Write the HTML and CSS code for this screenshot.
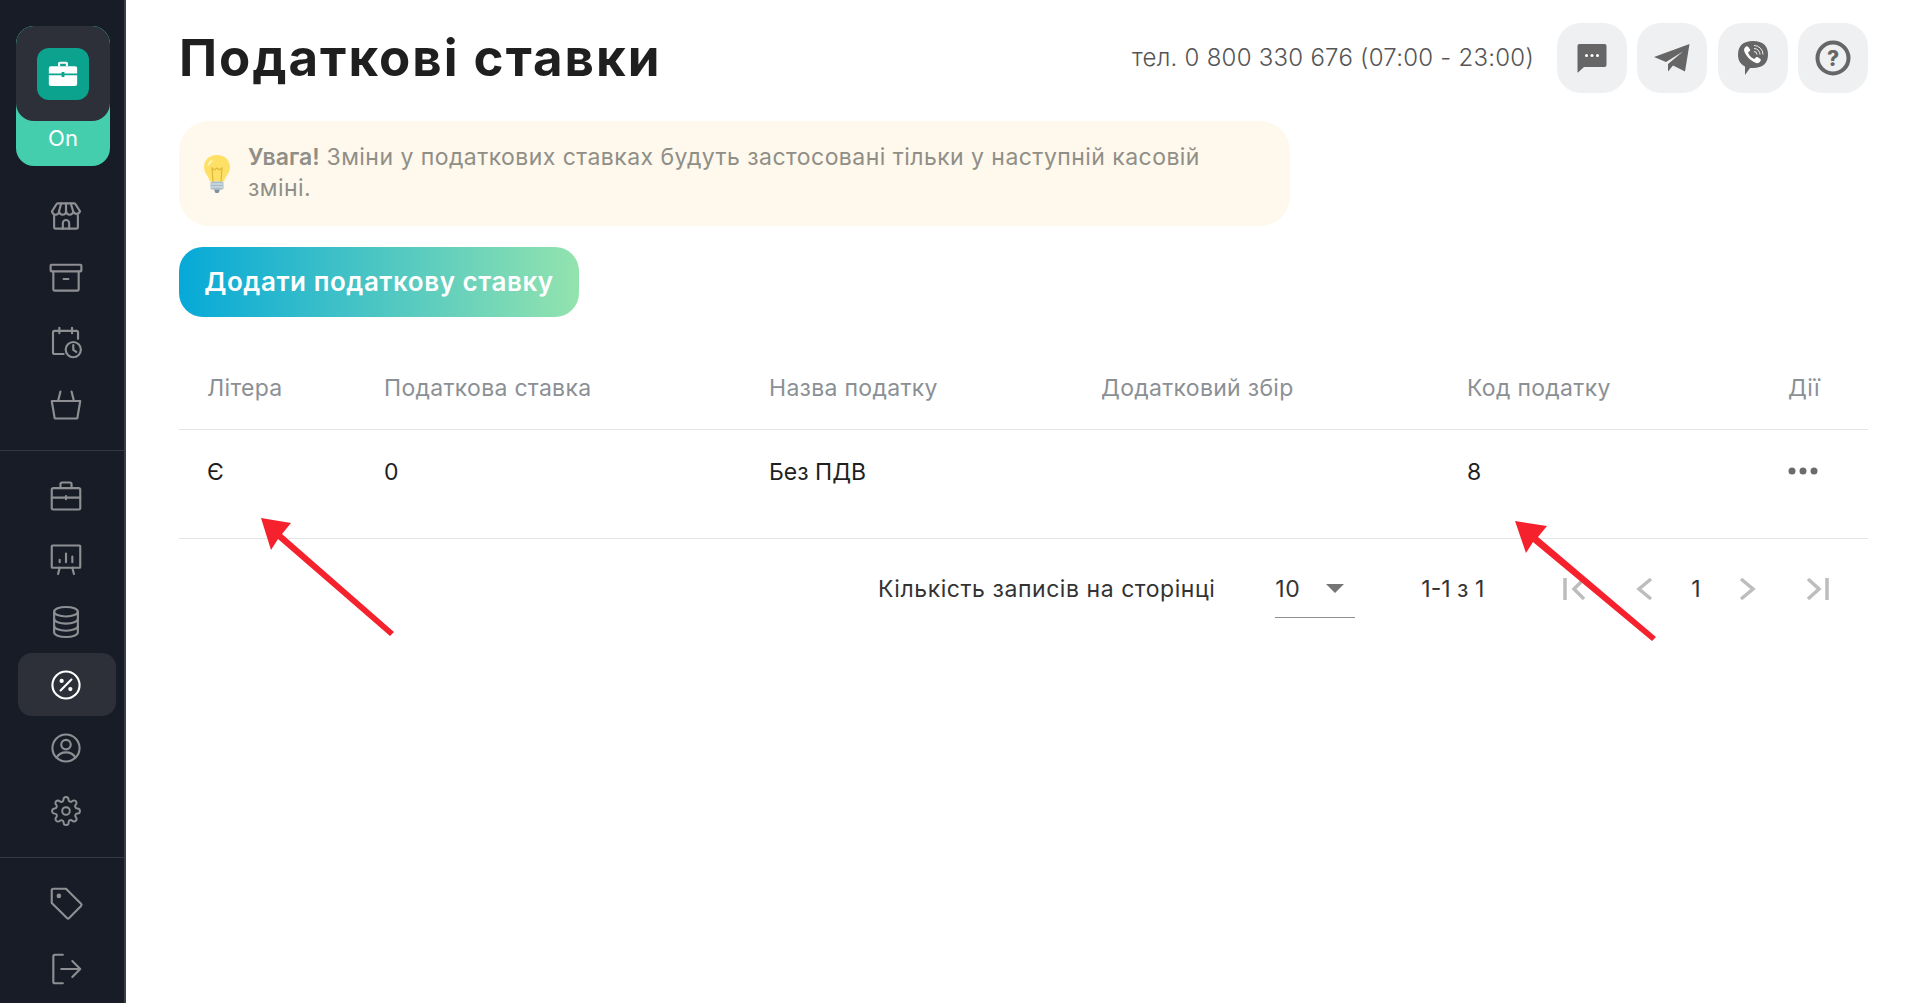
FILE: index.html
```html
<!DOCTYPE html>
<html lang="uk">
<head>
  <meta charset="UTF-8">
  <title>Податкові ставки</title>
  <link rel="stylesheet" href="styles.css">
</head>
<body>
  <aside class="sidebar">
    <div class="shift-widget">
      <div class="shift-top">
        <div class="shift-logo">
          <svg width="34" height="34" viewBox="0 0 24 24" fill="#fff"><path d="M8.500 6.500V4.600a1.300 1.300 0 0 1 1.300-1.300h4.400a1.300 1.300 0 0 1 1.300 1.300v1.900H14V4.800h-4v1.700z"/><path d="M2 8a1.500 1.500 0 0 1 1.500-1.500h17A1.500 1.500 0 0 1 22 8v3.600H13v-1h-2v1H2z"/><path d="M2 12.800h9v1.400h2v-1.400h9V19a1.500 1.500 0 0 1-1.500 1.500h-17A1.500 1.500 0 0 1 2 19z"/></svg>
        </div>
      </div>
      <div class="shift-status">On</div>
    </div>

    <nav class="nav-group nav-first">
      <a class="nav-item"><svg class="nav-icon" viewBox="0 0 24 24"><path d="M3.200 9L6 4.500a1 1 0 0 1 .8-.5H17.200a1 1 0 0 1 .8.5L20.800 9"/><path d="M3.200 9a2.200 2.200 0 0 0 4.450 0a2.200 2.200 0 0 0 4.450 0a2.200 2.200 0 0 0 4.450 0a2.200 2.200 0 0 0 4.250 0"/><path d="M7.600 9L9 4M12 9V4M16.500 9L15 4"/><path d="M4.500 11.500V19a1 1 0 0 0 1 1H18.500a1 1 0 0 0 1-1V11.500"/><path d="M10 20V16.500a2 2 0 0 1 4 0V20"/></svg></a>
      <a class="nav-item"><svg class="nav-icon" viewBox="0 1 24 24"><rect x="2.300" y="4" width="19.400" height="4.200" rx=".5"/><path d="M4 8.200V19.500a.8.8 0 0 0 .8.8H19.200a.8.8 0 0 0 .8-.8V8.200"/><path d="M10.500 13H13.500"/></svg></a>
      <a class="nav-item"><svg class="nav-icon" viewBox="0 0 24 24"><path d="M19.600 10V6a1 1 0 0 0-1-1H4.800a1 1 0 0 0-1 1V18.600a1 1 0 0 0 1 1H10.500"/><path d="M7.800 3V6.500M15.800 3V6.500"/><circle cx="16.600" cy="16.800" r="4.800"/><path d="M16.600 14V17L18.500 18.300"/></svg></a>
      <a class="nav-item"><svg class="nav-icon" viewBox="0 0 24 24"><path d="M3 9.500H21L19.300 19.500a1 1 0 0 1-1 1H5.700a1 1 0 0 1-1-1Z"/><path d="M8.500 3.500L7 9.500M15.500 3.500L17 9.500"/></svg></a>
    </nav>

    <nav class="nav-group nav-second">
      <a class="nav-item"><svg class="nav-icon" viewBox="0 0 24 24"><rect x="3" y="7" width="18" height="13.500" rx="1"/><path d="M8.500 7V4.500a1 1 0 0 1 1-1h5a1 1 0 0 1 1 1V7"/><path d="M3 13H21M12 12V14"/></svg></a>
      <a class="nav-item"><svg class="nav-icon" viewBox="0 0 24 24"><rect x="3" y="3.500" width="18" height="14" rx=".5"/><path d="M8 12.500V14M12 8.500V14M16 10.500V14"/><path d="M8 17.500L7 21.500M16 17.500L17 21.500"/></svg></a>
      <a class="nav-item"><svg class="nav-icon" viewBox="0 0 24 24"><ellipse cx="12" cy="5.500" rx="7.500" ry="3"/><path d="M4.500 5.500V18.500c0 1.700 3.400 3 7.500 3s7.500-1.300 7.500-3V5.500"/><path d="M4.500 10c0 1.700 3.400 3 7.500 3s7.500-1.300 7.500-3"/><path d="M4.500 14.500c0 1.700 3.400 3 7.500 3s7.500-1.300 7.500-3"/></svg></a>
      <a class="nav-item active"><svg class="nav-icon nav-round" viewBox="-2 -2 28 28"><circle cx="12" cy="12" r="10"/><path d="M8 16L16 8"/><circle class="dot" cx="8.800" cy="9" r=".8"/><circle class="dot" cx="15.200" cy="15" r=".8"/></svg></a>
      <a class="nav-item"><svg class="nav-icon nav-round" viewBox="-2 -2 28 28"><circle cx="12" cy="12" r="10"/><circle cx="12" cy="9.500" r="3.500"/><path d="M5 19.200c1.500-2.800 4-4 7-4s5.500 1.200 7 4"/></svg></a>
      <a class="nav-item"><svg class="nav-icon nav-round" viewBox="-3 -3 30 30"><circle cx="12" cy="12" r="3"/><path d="M19.400 15a1.650 1.650 0 0 0 .33 1.820l.06.06a2 2 0 0 1 0 2.830 2 2 0 0 1-2.830 0l-.06-.06a1.650 1.650 0 0 0-1.820-.33 1.650 1.650 0 0 0-1 1.510V21a2 2 0 0 1-2 2 2 2 0 0 1-2-2v-.09A1.650 1.650 0 0 0 9 19.400a1.650 1.650 0 0 0-1.820.33l-.06.06a2 2 0 0 1-2.830 0 2 2 0 0 1 0-2.830l.06-.06a1.650 1.650 0 0 0 .33-1.820 1.650 1.650 0 0 0-1.510-1H3a2 2 0 0 1-2-2 2 2 0 0 1 2-2h.09A1.650 1.650 0 0 0 4.600 9a1.650 1.650 0 0 0-.33-1.820l-.06-.06a2 2 0 0 1 0-2.830 2 2 0 0 1 2.830 0l.06.06a1.650 1.650 0 0 0 1.820.33H9a1.650 1.650 0 0 0 1-1.510V3a2 2 0 0 1 2-2 2 2 0 0 1 2 2v.09a1.650 1.650 0 0 0 1 1.510 1.650 1.650 0 0 0 1.820-.33l.06-.06a2 2 0 0 1 2.830 0 2 2 0 0 1 0 2.830l-.06.06a1.650 1.650 0 0 0-.33 1.820V9a1.650 1.650 0 0 0 1.510 1H21a2 2 0 0 1 2 2 2 2 0 0 1-2 2h-.09a1.650 1.650 0 0 0-1.510 1z"/></svg></a>
    </nav>

    <nav class="nav-group nav-last">
      <a class="nav-item"><svg class="nav-icon" viewBox="0 0 24 24"><path d="M3 4a1 1 0 0 1 1-1H12L21.500 12.500a1 1 0 0 1 0 1.400L14 21.500a1 1 0 0 1-1.400 0L3 12Z"/><circle class="dot" cx="7.500" cy="7.500" r=".8"/></svg></a>
      <a class="nav-item nav-exit"><svg class="nav-icon" viewBox="0 0 24 24"><path d="M10 3H5a1 1 0 0 0-1 1V20a1 1 0 0 0 1 1H10"/><path d="M9 12H21M16 7L21 12L16 17"/></svg></a>
    </nav>
  </aside>

  <main class="content">
    <header class="page-header">
      <h1 class="page-title">Податкові ставки</h1>
      <div class="header-right">
        <span class="phone">тел. 0 800 330 676 (07:00 - 23:00)</span>
        <button class="round-btn"><svg width="30" height="29" viewBox="0 0 30 29"><path fill="#666" d="M2.500 0H27.500a2 2 0 0 1 2 2V21a2 2 0 0 1-2 2H7L1 28.500a.3.3 0 0 1-.5-.2V2a2 2 0 0 1 2-2Z"/><circle fill="#fff" cx="9.500" cy="11.500" r="1.500"/><circle fill="#fff" cx="15" cy="11.500" r="1.500"/><circle fill="#fff" cx="20.500" cy="11.500" r="1.500"/></svg></button>
        <button class="round-btn"><svg width="36" height="28" viewBox="0 0 36 28"><path fill="#666" d="M35.500 0L0 13L12 18L29 7.500L14 20V27.500L19 21.500L31 27.500Z"/></svg></button>
        <button class="round-btn"><svg width="30" height="34" viewBox="0 0 30 34"><path fill="#666" d="M15 0C25 0 30 5 30 13.500C30 22 25 27 15 27H12L7 34V25.500C2 23 0 19 0 13.500C0 5 5 0 15 0Z"/><path fill="#fff" d="M8 5.500c1-.6 1.700-.3 2.300.5l1.600 2.300c.5.800.3 1.400-.4 2l-1 .8c-.4.4-.4.800-.2 1.200 1 2.600 2.900 4.500 5.500 5.500.5.200.9.100 1.100-.3l.9-1c.6-.7 1.200-.8 2-.3l2.300 1.600c.8.600 1 1.300.4 2.200-1 1.600-2.500 2.600-4.100 2C12.700 20 8 15.300 6.200 10c-.4-1.700.3-3.300 1.800-4.500Z"/><path fill="none" stroke="#fff" stroke-width=".9" d="M16 4.500a9 9 0 0 1 9 9M16 7.500a6 6 0 0 1 6 6M16 10.500a3 3 0 0 1 3 3"/></svg></button>
        <button class="round-btn"><svg width="36" height="36" viewBox="0 0 36 36"><circle cx="18" cy="18" r="15.500" fill="none" stroke="#666" stroke-width="4"/><text x="18" y="26" text-anchor="middle" class="help-mark">?</text></svg></button>
      </div>
    </header>

    <div class="notice">
      <svg class="bulb" width="32" height="40" viewBox="0 0 32 40"><path fill="#ffe066" d="M16 1C8 1 3 6.500 3 13c0 6 4.500 9 6 14.500h14C24.500 22 29 19 29 13 29 6.500 24 1 16 1Z"/><path fill="#fff3b0" d="M10 6c-2.500 1.500-3.500 4-3.500 6.500 1.500-.5 3-3 5-5 .8-.9-.5-2.100-1.500-1.500Z"/><path fill="none" stroke="#e0b93a" stroke-width="1.200" d="M12 27.500L11 14l2.500 2 2.500-2 2.500 2 2.500-2-1 13.500"/><rect x="9.500" y="27.500" width="13" height="8" rx="1.500" fill="#a9bcc7"/><path fill="none" stroke="#dfe8ec" stroke-width="1.200" d="M10 30H22M10 33H22"/><path fill="#7d929e" d="M13 35.500H19L17.500 39H14.500Z"/></svg>
      <p class="notice-text"><b>Увага!</b> Зміни у податкових ставках будуть застосовані тільки у наступній касовій зміні.</p>
    </div>

    <button class="add-btn">Додати податкову ставку</button>

    <table class="tax-table">
      <colgroup>
        <col class="col-letter"><col class="col-rate"><col class="col-name"><col class="col-extra"><col class="col-code"><col class="col-actions">
      </colgroup>
      <thead>
        <tr><th>Літера</th><th>Податкова ставка</th><th>Назва податку</th><th>Додатковий збір</th><th>Код податку</th><th>Дії</th></tr>
      </thead>
      <tbody>
        <tr>
          <td>Є</td><td>0</td><td>Без ПДВ</td><td></td><td>8</td>
          <td><svg class="dots" width="30" height="8" viewBox="0 0 30 8"><circle cx="4" cy="4" r="3.500"/><circle cx="15" cy="4" r="3.500"/><circle cx="26" cy="4" r="3.500"/></svg></td>
        </tr>
      </tbody>
    </table>

    <div class="pager">
      <span class="pager-label">Кількість записів на сторінці</span>
      <div class="pager-select"><span>10</span><i class="caret"></i></div>
      <span class="pager-range">1-1 з 1</span>
      <div class="pager-nav">
        <svg class="pager-icon" viewBox="0 0 30 30"><path d="M4 4V26M23 5L13 15L23 25"/></svg>
        <svg class="pager-icon gap-prev" viewBox="0 0 30 30"><path d="M21 5L9 15L21 25"/></svg>
        <span class="pager-page">1</span>
        <svg class="pager-icon" viewBox="0 0 30 30"><path d="M9 5L21 15L9 25"/></svg>
        <svg class="pager-icon gap-last" viewBox="0 0 30 30"><path d="M7 5L18 15L7 25M26 4V26"/></svg>
      </div>
    </div>
  </main>

  <!-- annotation arrows drawn over the screenshot -->
  <svg class="annotations" width="1920" height="1003" viewBox="0 0 1920 1003">
    <path fill="#f5222d" d="M261 518L291 523L282 534L394 632L390 636L278 539L271 550Z"/>
    <path fill="#f5222d" d="M1515 521L1547 526L1538 537L1656 637L1652 641L1533 542L1526 553Z"/>
  </svg>
</body>
</html>
```

FILE: styles.css
```css
* {
  box-sizing: border-box;
}

html, body {
  height: 100%;
}

body {
  margin: 0;
  display: flex;
  background: #fff;
  color: #1f1f1f;
  font-family: Inter, "Noto Sans", sans-serif;
  overflow: hidden;
}

/* sidebar */
.sidebar {
  flex: 0 0 126px;
  height: 100%;
  background: #181c27;
  border-right: 2px solid #3a3e47;
  display: flex;
  flex-direction: column;
}

.shift-widget {
  flex: none;
  width: 94px;
  margin: 26px 0 0 16px;
  background: #44ceae;
  border-radius: 18px;
  overflow: hidden;
}

.shift-top {
  height: 95px;
  background: #2d3038;
  border-radius: 18px;
  display: flex;
  align-items: center;
  justify-content: center;
}

.shift-logo {
  width: 52px;
  height: 52px;
  border-radius: 12px;
  background: #0ba38e;
  display: flex;
  align-items: center;
  justify-content: center;
}

.shift-status {
  height: 45px;
  color: #fff;
  font-size: 22px;
  line-height: 34px;
  text-align: center;
}

.nav-group {
  flex: none;
  display: flex;
  flex-direction: column;
  padding: 16px 0;
  border-bottom: 1px solid #343842;
}

.nav-first {
  padding: 18px 0 14px;
}

.nav-second {
  padding: 13px 0 15px;
}

.nav-last {
  border-bottom: 0;
  padding-top: 13px;
}

.nav-item {
  flex: none;
  width: 98px;
  height: 63px;
  margin-left: 18px;
  padding-right: 2px;
  border-radius: 14px;
  display: flex;
  align-items: center;
  justify-content: center;
}

.nav-exit {
  margin-top: 3px;
}

.nav-item.active {
  background: #2d3038;
}

.nav-icon {
  width: 38px;
  height: 38px;
  fill: none;
  stroke: #8e8f93;
  stroke-width: 1.350;
  stroke-linejoin: round;
  stroke-linecap: round;
}

.nav-round {
  stroke-width: 1.550;
}

.nav-icon .dot {
  fill: #8e8f93;
}

.active .nav-icon {
  stroke: #fff;
}

.active .nav-icon .dot {
  fill: #fff;
}

/* main */
.content {
  flex: 1;
  min-width: 0;
  padding: 23px 52px 0 53px;
}

.page-header {
  height: 70px;
  display: flex;
  align-items: center;
  justify-content: space-between;
}

.page-title {
  margin: 0;
  padding-bottom: 2px;
  font-size: 51px;
  font-weight: 700;
  letter-spacing: 2px;
  color: #1f1f1f;
}

.header-right {
  display: flex;
  align-items: center;
  gap: 10.500px;
}

.phone {
  margin-right: 12px;
  padding-bottom: 2px;
  font-size: 24px;
  font-weight: 300;
  letter-spacing: .25px;
  color: #555;
}

.round-btn {
  width: 70px;
  height: 70px;
  padding: 0;
  border: 0;
  border-radius: 24px;
  background: #eff0f2;
  display: flex;
  align-items: center;
  justify-content: center;
}

.help-mark {
  font-family: Inter, sans-serif;
  font-size: 21px;
  font-weight: 800;
  fill: #666;
}

.notice {
  width: 1111px;
  height: 105px;
  margin-top: 28px;
  padding: 0 70px 0 22px;
  border-radius: 30px;
  background: #fff8ec;
  display: flex;
  align-items: center;
  gap: 15px;
}

.bulb {
  flex: none;
}

.notice-text {
  margin: 0;
  padding-bottom: 2px;
  font-size: 23px;
  letter-spacing: .45px;
  line-height: 31px;
  color: #8f8f87;
}

.notice-text b {
  font-weight: 600;
  letter-spacing: 0;
}

.add-btn {
  display: block;
  width: 400px;
  height: 70px;
  margin-top: 21px;
  padding: 0 0 2px;
  border: 0;
  border-radius: 24px;
  background: linear-gradient(90deg, #06a9d8, #93e3ae);
  color: #fff;
  font-family: inherit;
  font-size: 26px;
  letter-spacing: .55px;
  font-weight: 600;
}

.tax-table {
  width: 100%;
  margin-top: 28px;
  border-collapse: collapse;
  table-layout: fixed;
  font-size: 23px;
}

.col-letter { width: 177px; }
.col-rate { width: 385px; }
.col-name { width: 332px; }
.col-extra { width: 366px; }
.col-code { width: 321px; }
.col-actions { width: 108px; }

.tax-table th {
  height: 84px;
  padding: 2px 0 0 28px;
  border-bottom: 1px solid #e3e4e6;
  color: #8b9095;
  font-weight: 400;
  letter-spacing: .3px;
  text-align: left;
}

.tax-table td {
  height: 109px;
  padding: 0 0 24px 28px;
  border-bottom: 1px solid #e3e4e6;
  color: #1f1f1f;
}

.dots {
  display: block;
  margin-top: -2px;
  fill: #6b6b6b;
}

.pager {
  height: 100px;
  display: flex;
  align-items: center;
  font-size: 23px;
  letter-spacing: .55px;
  padding-left: 699px;
}

.pager-label {
  color: #333;
  white-space: nowrap;
}

.pager-select {
  width: 80px;
  height: 50px;
  margin-left: 60px;
  margin-top: 8px;
  padding-bottom: 7px;
  border-bottom: 1px solid #8f8f8f;
  display: flex;
  align-items: center;
  justify-content: space-between;
  padding-right: 11px;
  color: #333;
}

.caret {
  width: 0;
  height: 0;
  border-left: 9px solid transparent;
  border-right: 9px solid transparent;
  border-top: 9px solid #757575;
}

.pager-range {
  margin-left: 66px;
  letter-spacing: 0;
  color: #333;
}

.pager-nav {
  display: flex;
  align-items: center;
  margin-left: 77px;
}

.pager-icon {
  width: 30px;
  height: 30px;
  fill: none;
  stroke: #bdbdbd;
  stroke-width: 3.500;
}

.gap-prev {
  margin-left: 39px;
}

.gap-last {
  margin-left: 39px;
}

.pager-page {
  width: 72px;
  text-align: center;
  color: #333;
}

.annotations {
  position: absolute;
  left: 0;
  top: 0;
  pointer-events: none;
}
```
